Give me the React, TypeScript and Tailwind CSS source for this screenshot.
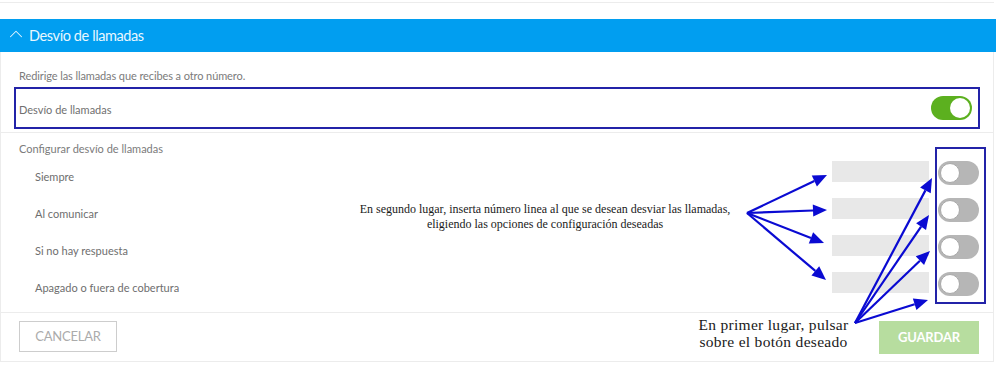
import React from 'react';
import { ChevronUp } from 'lucide-react';

const ui = { fontFamily: 'Lato, "Open Sans", sans-serif' };
const serif = { fontFamily: '"Liberation Serif", "Times New Roman", serif' };

const rows = ['Siempre', 'Al comunicar', 'Si no hay respuesta', 'Apagado o fuera de cobertura'];

type Pt = [number, number];

// arrows drawn over the screenshot: from a text anchor to each target
const arrows: { from: Pt; to: Pt }[] = [
  { from: [747, 213], to: [827, 175] },
  { from: [747, 213], to: [827, 210] },
  { from: [747, 213], to: [824, 243] },
  { from: [747, 213], to: [826, 280] },
  { from: [855, 323], to: [932, 178] },
  { from: [855, 323], to: [929, 215] },
  { from: [855, 323], to: [930, 251] },
  { from: [855, 323], to: [928, 300] },
];

function Arrow({ from, to }: { from: Pt; to: Pt }) {
  const dx = to[0] - from[0];
  const dy = to[1] - from[1];
  const len = Math.hypot(dx, dy);
  const ux = dx / len;
  const uy = dy / len;
  const head = 14;
  const half = 6;
  const bx = to[0] - ux * head;
  const by = to[1] - uy * head;
  const pts = [
    `${to[0]},${to[1]}`,
    `${bx - uy * half},${by + ux * half}`,
    `${bx + uy * half},${by - ux * half}`,
  ].join(' ');
  return (
    <g>
      <line x1={from[0]} y1={from[1]} x2={bx} y2={by} stroke="#0a0ad2" strokeWidth={2.2} />
      <polygon points={pts} fill="#0a0ad2" />
    </g>
  );
}

function Toggle({ on }: { on?: boolean }) {
  return (
    <div
      className={`w-[41px] h-[24px] rounded-full flex items-center px-[2px] ${
        on ? 'bg-[#5cb01f] justify-end' : 'bg-[#b6b6b6] justify-start'
      }`}
    >
      <div className={`w-[20px] h-[20px] rounded-full bg-white ${on ? '' : 'border border-[#a9a9a9]'}`} />
    </div>
  );
}

export default function App() {
  return (
    <div className="relative w-[999px] h-[365px] bg-white overflow-hidden" style={ui}>
      {/* previous card edge */}
      <div className="w-[994px] h-[3px] border-b border-[#ececec]" />

      <div className="mt-[16px] w-[996px]">
        {/* header */}
        <div className="h-[33px] bg-[#019ef0] flex items-center gap-[2px] pl-[5px] text-[#e8f7ff]">
          <ChevronUp size={22} strokeWidth={1.1} className="mt-[-3px]" />
          <span className="text-[14.5px] tracking-[-0.4px]">Desvío de llamadas</span>
        </div>

        {/* body */}
        <div className="w-[994px] border-x border-b border-[#ececec]">
          <div className="pt-[17px]">
            <p className="pl-[18px] text-[11px] leading-[14px] text-[#7b7b7b] tracking-[-0.1px]">
              Redirige las llamadas que recibes a otro número.
            </p>
            <div className="mt-[4px] mx-[13px] h-[42px] border-2 border-[#2323a8] flex items-center justify-between pl-[3px] pr-[6px]">
              <span className="text-[11px] text-[#707070] mt-[5px]">Desvío de llamadas</span>
              <Toggle on />
            </div>
          </div>

          <div className="mt-[3px] border-t border-[#ececec] pt-[9px] pb-[3px]">
            <p className="pl-[18px] text-[11px] leading-[14px] text-[#7b7b7b]">Configurar desvío de llamadas</p>
            <div className="mt-[5px] flex flex-col">
              {rows.map((r) => (
                <div key={r} className="h-[37px] flex items-start pl-[34px] pr-[14px]">
                  <span className="flex-1 mt-[9px] text-[11px] leading-[14px] text-[#6e6e6e]">{r}</span>
                  <div className="w-[97px] h-[21px] bg-[#e8e8e8]" />
                  <div className="ml-[9px]">
                    <Toggle />
                  </div>
                </div>
              ))}
            </div>
          </div>

          <div className="border-t border-[#ececec] pt-[8px] pb-[7px] pl-[18px] pr-[14px] flex items-start justify-between">
            <button className="w-[98px] h-[31px] border border-[#cdcdcd] text-[13px] text-[#ababab] tracking-[-0.2px]">
              CANCELAR
            </button>
            <button className="w-[100px] h-[33px] bg-[#b7dd9f] text-white text-[13px] font-bold tracking-[-0.2px]">
              GUARDAR
            </button>
          </div>
        </div>
      </div>

      {/* annotations over the screenshot */}
      <svg className="absolute inset-0 pointer-events-none" width={999} height={365}>
        <rect x={936} y={148} width={49} height={155} fill="none" stroke="#2323a8" strokeWidth={2} />
        {arrows.map((a, i) => (
          <Arrow key={i} from={a.from} to={a.to} />
        ))}
      </svg>

      <div className="absolute left-[340px] top-[202px] w-[410px] text-center text-[12px] leading-[15px] text-[#1a1a1a]" style={serif}>
        En segundo lugar, inserta número linea al que se desean desviar las llamadas,
        <br />
        eligiendo las opciones de configuración deseadas
      </div>

      <div className="absolute left-[686px] top-[316px] w-[175px] text-center text-[15.5px] leading-[17px] tracking-[0.3px] text-[#1a1a1a]" style={serif}>
        En primer lugar, pulsar
        <br />
        sobre el botón deseado
      </div>
    </div>
  );
}
